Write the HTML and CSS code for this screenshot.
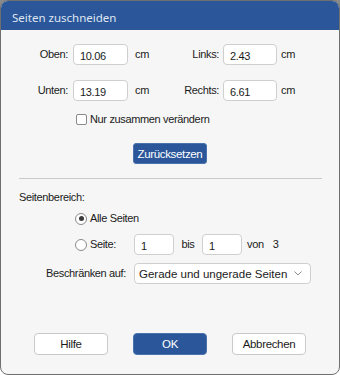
FILE: index.html
```html
<!DOCTYPE html>
<html lang="de">
<head>
<meta charset="utf-8">
<title>Seiten zuschneiden</title>
<link rel="stylesheet" href="styles.css">
</head>
<body>
<div class="window">
  <div class="titlebar">Seiten zuschneiden</div>
  <div class="content">
    <div class="margins">
      <span class="lbl">Oben:</span>
      <span class="field">10.06</span>
      <span class="unit">cm</span>
      <span class="lbl lbl2">Links:</span>
      <span class="field">2.43</span>
      <span class="unit unit2">cm</span>
      <span class="lbl">Unten:</span>
      <span class="field">13.19</span>
      <span class="unit">cm</span>
      <span class="lbl lbl2">Rechts:</span>
      <span class="field">6.61</span>
      <span class="unit unit2">cm</span>
    </div>
    <div class="check-row">
      <span class="checkbox"></span>
      <span class="txt">Nur zusammen verändern</span>
    </div>
    <div class="reset-row">
      <span class="btn btn-primary btn-reset">Zurücksetzen</span>
    </div>
    <div class="separator"></div>
    <div class="section-label">Seitenbereich:</div>
    <div class="radio-row">
      <span class="radio checked"></span>
      <span class="txt">Alle Seiten</span>
    </div>
    <div class="radio-row range-row">
      <span class="radio"></span>
      <span class="txt range-label">Seite:</span>
      <span class="field small">1</span>
      <span class="txt bis">bis</span>
      <span class="field small">1</span>
      <span class="txt von">von</span>
      <span class="txt total">3</span>
    </div>
    <div class="limit-row">
      <span class="txt limit-label">Beschränken auf:</span>
      <span class="select">
        <span class="select-text">Gerade und ungerade Seiten</span>
        <svg class="chev" width="8" height="5" viewBox="0 0 8 5"><polyline points="0.5,0.5 4,4 7.5,0.5" fill="none" stroke="#8a8a8a" stroke-width="1"/></svg>
      </span>
    </div>
    <div class="footer">
      <span class="btn">Hilfe</span>
      <span class="btn btn-primary">OK</span>
      <span class="btn">Abbrechen</span>
    </div>
  </div>
</div>
</body>
</html>
```
FILE: styles.css
```css
html, body {
  margin: 0;
  padding: 0;
}
body {
  width: 340px;
  height: 375px;
  background: linear-gradient(#8a8a8a 0 12px, #ffffff 12px);
  font-family: "Liberation Sans", Arial, sans-serif;
  font-size: 11px;
  letter-spacing: -0.35px;
  color: #1b1b1b;
}
.window {
  width: 340px;
  height: 375px;
  box-sizing: border-box;
  border: 1px solid #6f6f6f;
  border-radius: 8px;
  overflow: hidden;
  background: #f6f6f6;
  display: flex;
  flex-direction: column;
}
.titlebar {
  height: 29px;
  box-sizing: border-box;
  flex: none;
  background: #2b579a;
  color: #dfe6f1;
  font-family: "Noto Sans", "Open Sans", sans-serif;
  font-size: 11.5px;
  letter-spacing: 0;
  line-height: 25px;
  padding-left: 11px;
  padding-top: 4px;
}
.content {
  display: flex;
  flex-direction: column;
  flex: 1;
}
.margins {
  margin-top: 14px;
  display: grid;
  grid-template-columns: 72px 55px 40px 55px 54px auto;
  grid-auto-rows: 21px;
  row-gap: 15px;
  align-items: center;
}
.lbl {
  text-align: right;
  padding-right: 5px;
  line-height: 13px;
}
.lbl2 {
  padding-right: 4px;
}
.unit {
  padding-left: 7px;
  line-height: 13px;
}
.unit2 {
  padding-left: 4px;
}
.field {
  height: 21px;
  box-sizing: border-box;
  border: 1px solid #cfcfcf;
  border-radius: 4px;
  background: #ffffff;
  padding-left: 6px;
  line-height: 21px;
  padding-top: 1px;
  display: block;
}
.check-row {
  margin-top: 12px;
  height: 13px;
  display: flex;
  align-items: center;
  padding-left: 75px;
}
.checkbox {
  width: 11px;
  height: 11px;
  box-sizing: border-box;
  border: 1px solid #8a8a8a;
  border-radius: 2px;
  background: #ffffff;
  margin-right: 3px;
}
.txt {
  line-height: 13px;
}
.reset-row {
  margin-top: 17px;
  display: flex;
  justify-content: center;
}
.btn {
  width: 74px;
  height: 22px;
  box-sizing: border-box;
  border: 1px solid #c9c9c9;
  border-radius: 4px;
  background: #ffffff;
  display: flex;
  align-items: center;
  justify-content: center;
  font-size: 11.5px;
}
.btn-primary {
  background: #2b579a;
  border-color: #4a72ad;
  color: #ffffff;
}
.btn-reset {
  height: 21px;
  border-radius: 3px;
}
.separator {
  margin: 14px 17px 0 18px;
  height: 1px;
  background: #cacaca;
}
.section-label {
  margin-top: 12px;
  padding-left: 18px;
  line-height: 13px;
}
.radio-row {
  margin-top: 8px;
  display: flex;
  align-items: center;
  padding-left: 74px;
  height: 13px;
}
.radio {
  width: 12px;
  height: 12px;
  box-sizing: border-box;
  border: 1px solid #8a8a8a;
  border-radius: 50%;
  background: #ffffff;
  margin-right: 3px;
  display: flex;
  align-items: center;
  justify-content: center;
}
.radio.checked::after {
  content: "";
  width: 5px;
  height: 5px;
  border-radius: 50%;
  background: #3a3a3a;
}
.range-row {
  margin-top: 9px;
  height: 21px;
}
.range-label {
  width: 44px;
}
.field.small {
  width: 40px;
  padding-left: 6px;
}
.bis {
  width: 28px;
  text-align: center;
}
.von {
  margin-left: 5px;
}
.total {
  margin-left: 9px;
}
.limit-row {
  margin-top: 8px;
  display: flex;
  align-items: center;
  padding-left: 45px;
  height: 21px;
}
.limit-label {
  width: 88px;
}
.select {
  width: 177px;
  height: 21px;
  box-sizing: border-box;
  border: 1px solid #cfcfcf;
  border-radius: 4px;
  background: #ffffff;
  display: flex;
  align-items: center;
  padding-left: 4px;
  padding-right: 8px;
  font-size: 11.5px;
  letter-spacing: 0;
}
.select-text {
  flex: 1;
  padding-top: 1px;
}
.chev {
  display: block;
}
.footer {
  margin-top: 49px;
  display: flex;
  justify-content: center;
  gap: 25px;
}
```
